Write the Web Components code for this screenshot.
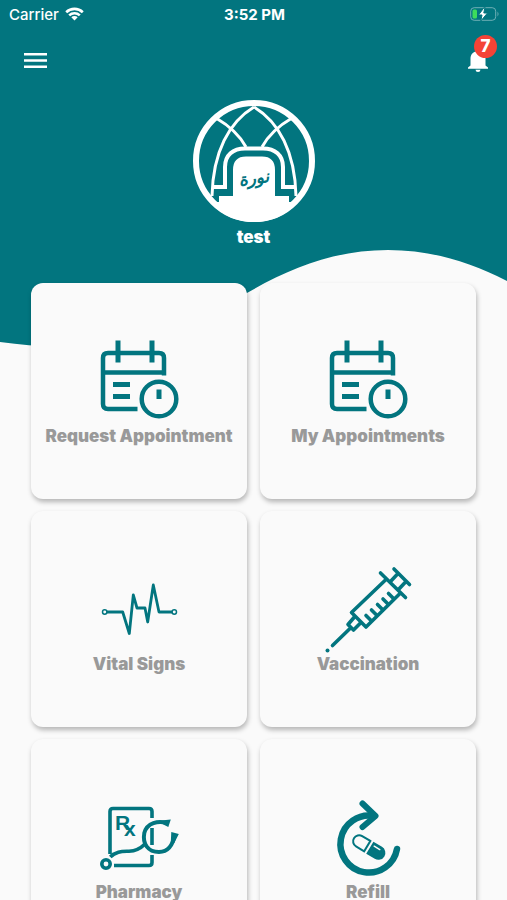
<!DOCTYPE html>
<html lang="en">
<head>
<meta charset="utf-8">
<meta name="viewport" content="width=device-width, initial-scale=1">
<title>Home</title>
<style>
  html {
    scrollbar-width: none;
  }
  body {
    margin: 0;
    background: #fafafa;
    font-family: Inter, "Liberation Sans", sans-serif;
    --teal: #02757f;
    --surface: #fafafa;
    --muted: #999;
  }
</style>
</head>
<body>
<home-page>
  <status-bar slot="top" carrier="Carrier" time="3:52 PM"></status-bar>
  <app-toolbar slot="top" count="7"></app-toolbar>
  <user-profile slot="top">test</user-profile>

  <service-card icon="calendar">Request Appointment</service-card>
  <service-card icon="calendar">My Appointments</service-card>
  <service-card icon="pulse">Vital Signs</service-card>
  <service-card icon="syringe">Vaccination</service-card>
  <service-card icon="pharmacy">Pharmacy</service-card>
  <service-card icon="refill">Refill</service-card>
</home-page>

<script>
const homeTemplate = document.createElement('template');
homeTemplate.innerHTML = `
  <style>
    :host {
      display: block;
      position: relative;
      min-height: 100vh;
      background: var(--surface);
    }
    .wave {
      position: absolute;
      top: 0;
      left: 0;
      width: 100%;
      height: 348px;
      fill: var(--teal);
    }
    header {
      position: relative;
    }
    main {
      position: relative;
      display: grid;
      grid-template-columns: 1fr 1fr;
      gap: 12px 13px;
      padding: 35px 31px 32px;
    }
  </style>
  <svg class="wave" viewBox="0 0 507 348" preserveAspectRatio="none" aria-hidden="true">
    <path d="M0 0H507V281C468 261 430 250 388 250C335 250 290 268 247 293C190 325 110 358 0 342Z"/>
  </svg>
  <header><slot name="top"></slot></header>
  <main><slot></slot></main>
`;

class HomePage extends HTMLElement {
  constructor() {
    super();
    this.attachShadow({ mode: 'open' }).appendChild(
      homeTemplate.content.cloneNode(true),
    );
  }
}

const statusTemplate = document.createElement('template');
statusTemplate.innerHTML = `
  <style>
    :host {
      display: grid;
      grid-template-columns: 1fr auto 1fr;
      align-items: center;
      height: 28px;
      padding: 0 7px 0 9px;
      color: #fff;
      font-size: 15px;
    }
    .left {
      display: flex;
      align-items: center;
      gap: 6px;
      font-weight: 500;
    }
    .time {
      font-weight: 700;
    }
    .battery {
      justify-self: end;
    }
    svg {
      display: block;
    }
  </style>
  <div class="left">
    <span class="carrier"></span>
    <svg width="19" height="14" viewBox="0 0 19 14" fill="none" stroke="#fff" stroke-width="2.6" aria-hidden="true">
      <path d="M1.2 5.2a12 12 0 0 1 16.6 0M4.2 8.4a7.7 7.7 0 0 1 10.6 0"/>
      <path d="M9.5 13.5L6.3 10.3a4.5 4.5 0 0 1 6.4 0Z" fill="#fff" stroke="none"/>
    </svg>
  </div>
  <span class="time"></span>
  <svg class="battery" width="30" height="14" viewBox="0 0 30 14" aria-hidden="true">
    <rect x=".7" y=".7" width="25" height="12.6" rx="3.5" fill="none" stroke="#6fb0b6"/>
    <path d="M27.500 4.500q2 2.500 0 5Z" fill="#6fb0b6"/>
    <rect x="2.500" y="2.500" width="4.500" height="9" rx="1.500" fill="#3ddc5b"/>
    <path d="M14.5 0L8.5 8H12L10.8 14L17.5 6H13.8L15 0Z" fill="#fff" stroke="#02757f" stroke-width="1"/>
  </svg>
`;

class StatusBar extends HTMLElement {
  constructor() {
    super();
    this.attachShadow({ mode: 'open' }).appendChild(
      statusTemplate.content.cloneNode(true),
    );
  }

  connectedCallback() {
    this.shadowRoot.querySelector('.carrier').textContent = this.getAttribute('carrier');
    this.shadowRoot.querySelector('.time').textContent = this.getAttribute('time');
  }
}

const toolbarTemplate = document.createElement('template');
toolbarTemplate.innerHTML = `
  <style>
    :host {
      display: flex;
      justify-content: space-between;
      align-items: center;
      height: 64px;
      padding: 0 14px 0 20px;
    }
    button {
      position: relative;
      display: flex;
      align-items: center;
      justify-content: center;
      width: 30px;
      height: 30px;
      padding: 0;
      border: 0;
      background: none;
      color: #fff;
      font-family: inherit;
      cursor: pointer;
    }
    svg {
      fill: currentColor;
    }
    .badge {
      position: absolute;
      top: -10px;
      right: -4px;
      width: 23px;
      height: 23px;
      border-radius: 50%;
      background: #f44336;
      font-size: 17px;
      font-weight: 800;
      line-height: 23px;
      text-align: center;
    }
  </style>
  <button type="button" aria-label="Menu">
    <svg width="23" height="15" viewBox="0 0 23 15"><path d="M0 0H23V2.6H0ZM0 6.2H23V8.8H0ZM0 12.4H23V15H0Z"/></svg>
  </button>
  <button type="button" aria-label="Notifications">
    <svg width="20" height="24" viewBox="0 0 20 24">
      <path d="M10 24a2.5 2.5 0 0 0 2.5-2.3h-5A2.5 2.5 0 0 0 10 24ZM17.500 17.500V10.500C17.500 6.600 15.200 4 11.800 3.200V2a1.800 1.800 0 0 0-3.600 0V3.200C4.800 4 2.500 6.600 2.500 10.500V17.500L0 19.500V20.700H20V19.500Z"/>
    </svg>
    <span class="badge"></span>
  </button>
`;

class AppToolbar extends HTMLElement {
  constructor() {
    super();
    this.attachShadow({ mode: 'open' }).appendChild(
      toolbarTemplate.content.cloneNode(true),
    );
  }

  connectedCallback() {
    this.shadowRoot.querySelector('.badge').textContent = this.getAttribute('count');
  }
}

const profileTemplate = document.createElement('template');
profileTemplate.innerHTML = `
  <style>
    :host {
      display: flex;
      flex-direction: column;
      align-items: center;
      gap: 4px;
      padding-top: 8px;
      color: #fff;
      font-size: 17px;
      font-weight: 900;
      line-height: 22px;
    }
    svg {
      display: block;
    }
    .name {
      display: block;
    }
  </style>
  <svg width="122" height="122" viewBox="0 0 122 122" fill="none" stroke="#fff" stroke-width="3" aria-hidden="true">
    <circle cx="61" cy="61" r="58" stroke-width="6"/>
    <!-- vault ribs -->
    <path d="M61 7C36 22 20 52 19 96M61 7C86 22 102 52 103 96"/>
    <path d="M23 18C35 25 46 34 53 47M99 18C87 25 76 34 69 47"/>
    <!-- doorway -->
    <path d="M20 87H32V67C32 55 40 48.500 52 48.500H70C82 48.500 90 55 90 67V87H102" stroke-width="4"/>
    <path d="M26 96H40V70Q40 56.500 53 56.500H69Q82 56.500 82 70V96H96V102H105A58 58 0 0 1 17 102H26Z" fill="#fff" stroke="none"/>
    <text x="61" y="84" transform="rotate(-8 61 80)" text-anchor="middle" direction="rtl" fill="#02757f" stroke="none" font-family="DejaVu Sans" font-style="italic" font-weight="700" font-size="17">نورة</text>
  </svg>
  <span class="name"><slot></slot></span>
`;

class UserProfile extends HTMLElement {
  constructor() {
    super();
    this.attachShadow({ mode: 'open' }).appendChild(
      profileTemplate.content.cloneNode(true),
    );
  }
}

// All icons share an 84x84 box and are drawn with currentColor
const icons = {
  calendar: `
    <g stroke-width="4.5">
      <path d="M67 38.5V21q0-5-5-5H11q-5 0-5 5V67q0 5 5 5H40.5M6 35.5H67"/>
      <path d="M21 3.5V25.5M55 3.5V25.5M16 47.5H33M16 59.5H33" stroke-width="5"/>
      <circle cx="62" cy="62" r="17.3"/>
      <path d="M62 52.5V62" stroke-width="5"/>
    </g>`,
  pulse: `
    <g stroke-width="2.8" stroke-linejoin="round">
      <path d="M10 47H25.7L32.3 68.5L36.3 30L40 43H48L50.7 57L56.3 20L62 47H75"/>
      <circle cx="7.7" cy="47" r="2.2" stroke-width="1.5"/>
      <circle cx="77.3" cy="47" r="2.2" stroke-width="1.5"/>
    </g>`,
  syringe: `
    <g stroke-width="3.6" stroke-linecap="round" stroke-linejoin="round">
      <path d="M68 4L83.5 19.5M54.5 8L79.5 32.5M72 8.5L64.5 16.5M80 16.5L72.5 24.5"/>
      <path d="M60 14.5L25.5 47.5L40 62L74 28.5"/>
      <path d="M28 52.5L22 59.5L27.5 65L34 58.5M24 63.5L6.5 80.5"/>
      <path d="M40 50.5L45 55.5M45.5 45L50.5 50M51.5 39.5L56.5 44.5M57 34L62 39M62.5 28.5L67.5 33.5"/>
    </g>
    <circle cx="1.5" cy="85.5" r="2" fill="currentColor" stroke="none"/>`,
  pharmacy: `
    <g stroke-width="3.6">
      <path d="M13 61V18.500q0-3 3-3H52q3 0 3 3V25M55 35V52M55 62V69.500q0 3-3 3H17"/>
      <circle cx="9" cy="71" r="4.200"/>
      <path d="M13.300 64C19 58 26 58.500 32 58.200C40 58 44 55 48 51"/>
      <path d="M71.300 30.500C61 27 50 30 47.300 40C45.300 51 51 59 62 59C71 59 76 52 77.800 41" stroke-width="4"/>
      <path d="M64 27.500L73.800 26.500L71.300 34L65.300 31ZM74.300 39L81.800 41L77.300 50L73.800 49Z" fill="currentColor" stroke="none"/>
    </g>
    <g fill="currentColor" stroke="none" font-family="Liberation Sans" font-weight="700">
      <text x="18" y="37" font-size="21">R<tspan x="27" y="43">x</tspan></text>
    </g>`,
  refill: `
    <g stroke-width="6.5" stroke-linecap="round" stroke-linejoin="round">
      <path d="M71 56A28.500 28.500 0 1 1 48 23"/>
      <path d="M36.500 10.500L49.500 23L36.500 34" stroke-width="6"/>
    </g>
    <g transform="rotate(31 42.7 54)">
      <path d="M41 48H31.500a6 6 0 0 0 0 12H41Z" stroke-width="2"/>
      <path d="M44 47H54a7 7 0 0 1 0 14H44Z" fill="currentColor" stroke="none"/>
      <path d="M47 50.500H53.500" stroke="#fafafa" stroke-width="1.5" stroke-linecap="round"/>
    </g>`,
};

const cardTemplate = document.createElement('template');
cardTemplate.innerHTML = `
  <style>
    :host {
      display: block;
      aspect-ratio: 1;
    }
    button {
      display: flex;
      flex-direction: column;
      align-items: center;
      justify-content: center;
      gap: 4px;
      width: 100%;
      height: 100%;
      padding: 2px 0 0;
      border: 0;
      border-radius: 12px;
      background: var(--surface);
      box-shadow: 1px 3px 5px rgba(0, 0, 0, 0.28);
      color: var(--muted);
      font-family: inherit;
      font-size: 17px;
      font-weight: 900;
      line-height: 22px;
      white-space: nowrap;
      cursor: pointer;
    }
    svg {
      display: block;
      overflow: visible;
      color: var(--teal);
    }
  </style>
  <button type="button">
    <svg width="84" height="84" viewBox="0 0 84 84" fill="none" stroke="currentColor" aria-hidden="true"></svg>
    <span><slot></slot></span>
  </button>
`;

class ServiceCard extends HTMLElement {
  constructor() {
    super();
    this.attachShadow({ mode: 'open' }).appendChild(
      cardTemplate.content.cloneNode(true),
    );
  }

  connectedCallback() {
    this.shadowRoot.querySelector('svg').innerHTML = icons[this.getAttribute('icon')] || '';
  }
}

customElements.define('home-page', HomePage);
customElements.define('status-bar', StatusBar);
customElements.define('app-toolbar', AppToolbar);
customElements.define('user-profile', UserProfile);
customElements.define('service-card', ServiceCard);
</script>
</body>
</html>
